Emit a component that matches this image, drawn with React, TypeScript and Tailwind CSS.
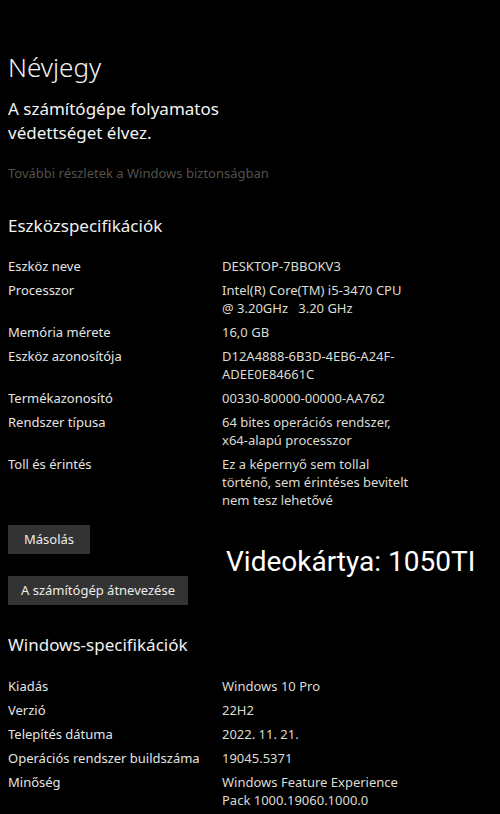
import React from "react";

const font = { fontFamily: '"Noto Sans", "Open Sans", sans-serif' };

function Row({ label, value }: { label: string; value: React.ReactNode }) {
  return (
    <div className="grid grid-cols-[214px_1fr] text-[13px] leading-[18px]">
      <div className="text-[#e4e4e4]">{label}</div>
      <div className="text-[#dcdcd4]">{value}</div>
    </div>
  );
}

export default function App() {
  return (
    <div className="w-[500px] h-[814px] bg-black overflow-hidden pl-[8px]" style={font}>
      <div className="pt-[50px] text-[26px] leading-[34px] font-light text-[#f2f2f2]">Névjegy</div>
      <div className="mt-[13px] text-[17px] leading-[24px] text-[#f4f4f4]">
        A számítógépe folyamatos
        <br />
        védettséget élvez.
      </div>
      <div className="mt-[19px] text-[13px] leading-[18px] text-[#52524a]">
        További részletek a Windows biztonságban
      </div>
      <div className="mt-[32px] text-[17px] leading-[24px] text-[#f0f0f0]">Eszközspecifikációk</div>
      <div className="mt-[19px] flex flex-col gap-[6px]">
        <Row label="Eszköz neve" value="DESKTOP-7BBOKV3" />
        <Row
          label="Processzor"
          value={
            <>
              Intel(R) Core(TM) i5-3470 CPU
              <br />@ 3.20GHz&nbsp;&nbsp;&nbsp;3.20 GHz
            </>
          }
        />
        <Row label="Memória mérete" value="16,0 GB" />
        <Row
          label="Eszköz azonosítója"
          value={
            <>
              D12A4888-6B3D-4EB6-A24F-
              <br />
              ADEE0E84661C
            </>
          }
        />
        <Row label="Termékazonosító" value="00330-80000-00000-AA762" />
        <Row
          label="Rendszer típusa"
          value={
            <>
              64 bites operációs rendszer,
              <br />
              x64-alapú processzor
            </>
          }
        />
        <Row
          label="Toll és érintés"
          value={
            <>
              Ez a képernyő sem tollal
              <br />
              történő, sem érintéses bevitelt
              <br />
              nem tesz lehetővé
            </>
          }
        />
      </div>
      <div className="mt-[16px] flex items-center">
        <div className="flex flex-col gap-[22px]">
          <button className="w-fit h-[29px] px-[16px] bg-[#333333] text-[13px] text-[#ececec]">Másolás</button>
          <button className="w-fit h-[29px] px-[13px] bg-[#333333] text-[13px] text-[#ececec]">
            A számítógép átnevezése
          </button>
        </div>
        <div
          className="ml-[38px] mb-[6px] text-[28px] leading-[34px] text-white"
          style={{ fontFamily: 'Roboto, "Noto Sans", sans-serif' }}
        >
          Videokártya: 1050TI
        </div>
      </div>
      <div className="mt-[28px] text-[17px] leading-[24px] text-[#f0f0f0]">Windows-specifikációk</div>
      <div className="mt-[20px] flex flex-col gap-[6px]">
        <Row label="Kiadás" value="Windows 10 Pro" />
        <Row label="Verzió" value="22H2" />
        <Row label="Telepítés dátuma" value="2022. 11. 21." />
        <Row label="Operációs rendszer buildszáma" value="19045.5371" />
        <Row
          label="Minőség"
          value={
            <>
              Windows Feature Experience
              <br />
              Pack 1000.19060.1000.0
            </>
          }
        />
      </div>
    </div>
  );
}
